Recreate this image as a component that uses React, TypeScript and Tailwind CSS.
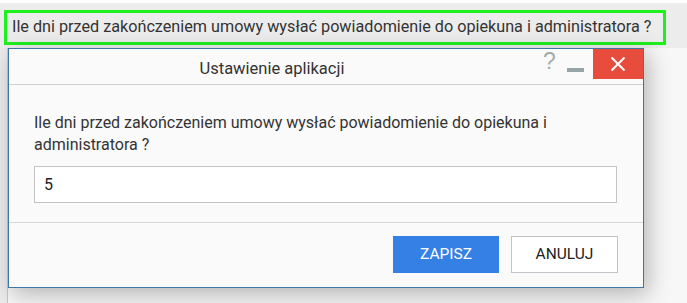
import React from "react";

export default function App() {
  return (
    <div className="w-[687px] h-[303px] bg-[#f7f7f7] overflow-hidden font-['Roboto',sans-serif] relative">
      <div className="h-[3px] bg-white" />
      <div className="h-[45px] bg-[#ececec] pt-[7px] pl-[4px]">
        <div className="w-[662px] h-[35px] border-[3px] border-[#1ef01e] flex items-center pl-[5px] text-[16.2px] text-[#333] leading-none whitespace-nowrap">
          Ile dni przed zakończeniem umowy wysłać powiadomienie do opiekuna i administratora ?
        </div>
      </div>
      <div className="flex">
        <div className="w-[8px] border-r border-[#c8c8c8] h-[255px] bg-[#ececec]" />
        <div className="w-[636px] h-[240px] bg-[#fafafa] border border-[#3d75a6] shadow-[4px_6px_22px_rgba(0,0,0,0.28)] flex flex-col relative z-10">
          <div className="h-[36px] border-b border-[#d0d0d0] flex items-start relative">
            <div className="w-[526px] text-center text-[16.5px] text-[#333] pt-[8px]">Ustawienie aplikacji</div>
            <div className="absolute left-[534px] top-[1px] text-[23px] leading-none text-[#a3acac] font-['Liberation_Sans',sans-serif]">?</div>
            <div className="absolute left-[558px] top-[19px] w-[17px] h-[4px] bg-[#95a5a6]" />
            <div className="absolute right-0 top-0 w-[50px] h-[30px] bg-[#e74c3c] flex items-center justify-center">
              <svg width="16" height="16" viewBox="0 0 16 16">
                <path d="M1.5 1.5 L14.5 14.5 M14.5 1.5 L1.5 14.5" stroke="white" strokeWidth="2" fill="none" />
              </svg>
            </div>
          </div>
          <div className="h-[138px] border-b border-[#d8d8d8] px-[25px] pt-[27px]">
            <div className="text-[16px] leading-[22px] text-[#333] w-[560px]">
              Ile dni przed zakończeniem umowy wysłać powiadomienie do opiekuna i administratora ?
            </div>
            <div className="mt-[10px] h-[37px] w-[583px] border border-[#c4c4c4] bg-white flex items-center px-[9px] text-[16px] text-[#222]">
              5
            </div>
          </div>
          <div className="flex-1 flex justify-end items-start pt-[13px] pr-[25px] gap-[12px]">
            <div className="w-[106px] h-[37px] bg-[#3580e4] text-white text-[15.5px] flex items-center justify-center">ZAPISZ</div>
            <div className="w-[107px] h-[37px] border border-[#c0c4c8] bg-white text-[#222] text-[15.5px] flex items-center justify-center">ANULUJ</div>
          </div>
        </div>
      </div>
    </div>
  );
}
